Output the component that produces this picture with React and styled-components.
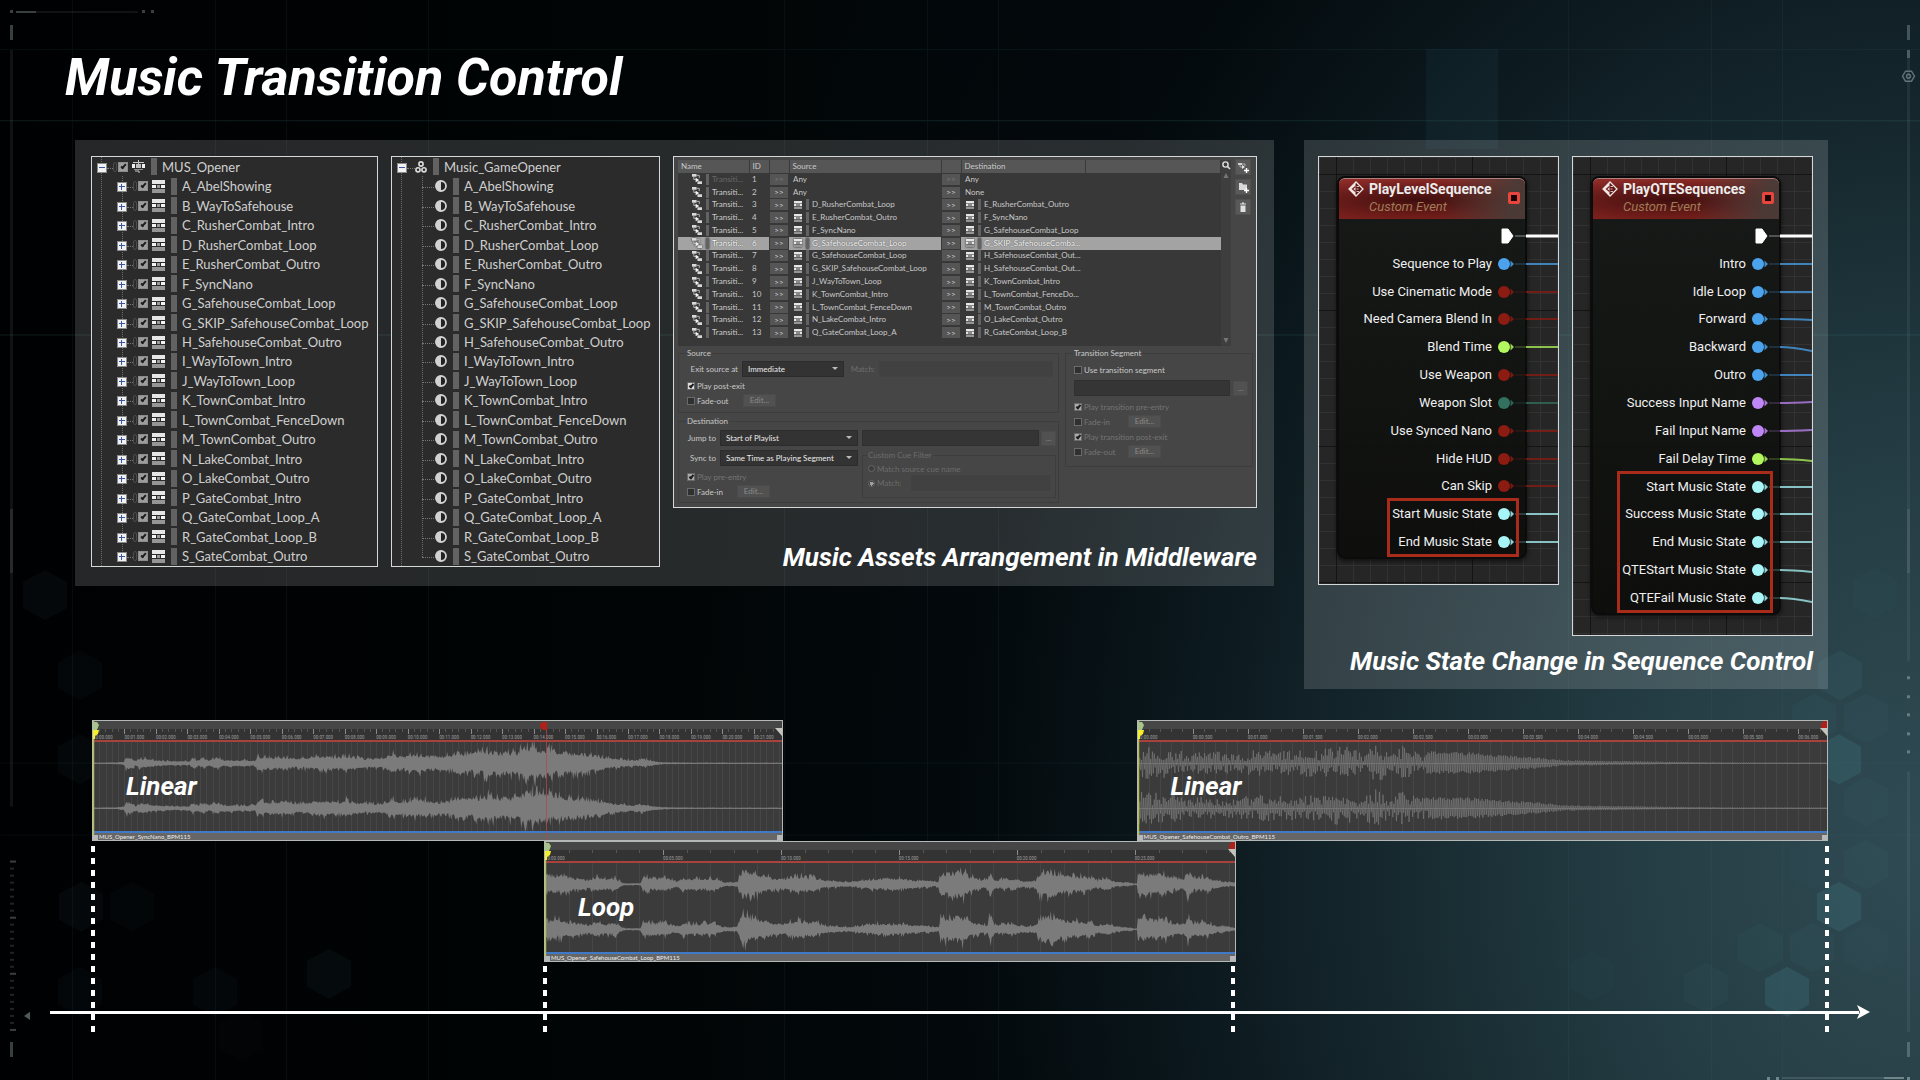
import React from "react";
import styled, { createGlobalStyle, css } from "styled-components";

const DISPLAY = `Roboto, "Noto Sans", sans-serif`;
const TREE_FONT = `Lato, "Open Sans", sans-serif`;
const RULER_FONT = `"Roboto Condensed", Roboto, sans-serif`;

const GlobalStyle = createGlobalStyle`
  *, *::before, *::after { box-sizing: border-box; }
  body { margin: 0; background: #010203; }
  ul { list-style: none; margin: 0; padding: 0; }
  h1, h2, h3, p { margin: 0; }
  button, input, select { font: inherit; color: inherit; margin: 0; padding: 0; border-radius: 0; }
`;

/* ---------- page ---------- */

const Page = styled.main`
  position: relative;
  isolation: isolate;
  min-height: 100vh;
  padding: 48px 92px 48px 75px;
  overflow: hidden;
  font-family: ${DISPLAY};
  color: #fff;
  background:
    radial-gradient(ellipse 1060px 1400px at 100% 78%,
      #304a54 0%, #294249 18%, #20373e 34%, #15272d 52%, #0a161b 72%, rgba(3, 9, 12, 0.9) 90%, rgba(1, 3, 4, 0) 118%),
    linear-gradient(90deg, #000102 0%, #010506 35%, #02080b 60%, #03090d 100%);
`;

const Backdrop = styled.svg`
  position: absolute;
  inset: 0;
  z-index: -1;
  width: 100%;
  height: 100%;
`;

const Title = styled.h1`
  margin-left: -10px;
  font: italic 700 52px/60px ${DISPLAY};
`;

const Panels = styled.div`
  display: grid;
  grid-template-columns: 1199fr 524fr;
  align-items: start;
  gap: 30px;
  margin-top: 32px;
`;

const Panel = styled.section`
  display: grid;
  grid-template-columns: ${(p) => p.$columns};
  column-gap: 13px;
  align-items: start;
  padding: ${(p) => p.$padding};
  background: rgba(255, 255, 255, 0.15);
`;

const Caption = styled.h2`
  grid-column: ${(p) => (p.$wide ? "1 / -1" : "auto")};
  margin-top: ${(p) => (p.$wide ? "9px" : "33px")};
  font: italic 700 26px/32px ${DISPLAY};
  text-align: right;
  white-space: nowrap;
`;

const shot = css`
  border: 1px solid #d4d8d8;
`;

/* ---------- trees ---------- */

const Tree = styled.div`
  ${shot}
  position: relative;
  display: grid;
  grid-template-rows: 1fr 20fr;
  height: 411px;
  background: #2b2b2b;
  color: #cfcfcf;
  font: 400 13px/18px ${TREE_FONT};
  &::before {
    content: "";
    position: absolute;
    left: 9px;
    top: 0;
    bottom: 0;
    border-left: 1px dotted #6c6c6c;
  }
`;

const Branch = styled.ul`
  position: relative;
  display: grid;
  grid-auto-rows: 1fr;
  &::before {
    content: "";
    position: absolute;
    left: 30px;
    top: 0;
    bottom: 9px;
    border-left: 1px dotted #6c6c6c;
  }
`;

const Row = styled.div`
  position: relative;
  display: flex;
  align-items: center;
  height: 100%;
  padding-left: ${(p) => p.$indent}px;
  white-space: nowrap;
`;

const Expander = styled.button`
  position: relative;
  flex: none;
  width: 10px;
  height: 10px;
  margin-top: 2px;
  border: 1px solid #8a8a8a;
  background: #f2f2f2;
  &::before, &::after {
    content: "";
    position: absolute;
    left: 1px;
    top: 3px;
    width: 6px;
    height: 1px;
    background: #3a55a8;
  }
  &::after {
    display: ${(p) => (p.$open ? "none" : "block")};
    left: 3px;
    top: 1px;
    width: 1px;
    height: 6px;
  }
`;

const Dots = styled.span`
  flex: none;
  width: ${(p) => p.$w}px;
  margin-top: 3px;
  margin-right: ${(p) => p.$after || 0}px;
  border-top: 1px dotted #777;
`;

const Chain = styled.span`
  flex: none;
  width: 4px;
  height: 10px;
  margin-right: 1px;
  border: 1px solid #4c4c4c;
  border-radius: 2px;
`;

const Check = styled.input.attrs({ type: "checkbox" })`
  appearance: none;
  position: relative;
  flex: none;
  width: ${(p) => p.$size}px;
  height: ${(p) => p.$size}px;
  border: 1px solid ${(p) => (p.$size > 8 ? "#8d8d8d" : "#6a6a6a")};
  background: #303030;
  &:checked { background: ${(p) => (p.$size > 8 ? "#9d9d9d" : "#dcdcdc")}; }
  &:checked:disabled { background: #aaa; }
  &:checked::after {
    content: "";
    position: absolute;
    left: ${(p) => (p.$size > 8 ? 3 : 2)}px;
    top: 0;
    width: 3px;
    height: ${(p) => (p.$size > 8 ? 6 : 5)}px;
    border: solid #1c1c1c;
    border-width: 0 2px 2px 0;
    transform: rotate(40deg);
  }
`;

const IconBox = styled.svg`
  display: block;
  flex: none;
  width: ${(p) => p.$w}px;
  height: ${(p) => p.$h || p.$w}px;
`;

const Bar = styled.span`
  flex: none;
  width: ${(p) => p.$w || 6}px;
  height: ${(p) => p.$h || 17}px;
  margin: 0 5px 0 6px;
  background: #626262;
`;

const SegmentIcon = ({ w = 13 }) => (
  <IconBox $w={w} viewBox="0 0 13 13" aria-hidden="true">
    <rect x="0" y="0" width="13" height="4" fill="#e6e6e6" />
    <rect x="0" y="5" width="4" height="3" fill="#f4f4f4" />
    <rect x="5" y="5" width="3" height="3" fill="#9a9a9a" />
    <rect x="9" y="5" width="4" height="3" fill="#f4f4f4" />
    <rect x="0" y="9" width="13" height="4" fill="#959595" />
  </IconBox>
);

const PlaylistIcon = () => (
  <IconBox $w={13} viewBox="0 0 13 13" aria-hidden="true">
    <path d="M6.500 0v4M1 2.500h11M3 11h4v2" stroke="#c8c8c8" fill="none" />
    <rect x="0" y="4" width="3" height="4" fill="#f0f0f0" />
    <rect x="4" y="4" width="5" height="4" fill="#c0c0c0" />
    <rect x="10" y="4" width="3" height="4" fill="#f0f0f0" />
    <path d="M2 9.500h9" stroke="#8a8a8a" />
  </IconBox>
);

const GroupIcon = () => (
  <IconBox $w={12} viewBox="0 0 12 12" aria-hidden="true">
    <g fill="none" stroke="#dcdcdc" strokeWidth="1.6">
      <circle cx="6" cy="3" r="2.1" />
      <circle cx="3" cy="8.8" r="2.1" />
      <circle cx="9" cy="8.8" r="2.1" />
    </g>
  </IconBox>
);

const StateIcon = () => (
  <IconBox $w={12} viewBox="0 0 12 12" aria-hidden="true">
    <circle cx="6" cy="6" r="5" fill="#222" stroke="#d2d2d2" strokeWidth="1.8" />
    <path d="M6 0.5a5.5 5.5 0 0 0 0 11z" fill="#d2d2d2" />
  </IconBox>
);

const assets = [
  "A_AbelShowing", "B_WayToSafehouse", "C_RusherCombat_Intro", "D_RusherCombat_Loop",
  "E_RusherCombat_Outro", "F_SyncNano", "G_SafehouseCombat_Loop", "G_SKIP_SafehouseCombat_Loop",
  "H_SafehouseCombat_Outro", "I_WayToTown_Intro", "J_WayToTown_Loop", "K_TownCombat_Intro",
  "L_TownCombat_FenceDown", "M_TownCombat_Outro", "N_LakeCombat_Intro", "O_LakeCombat_Outro",
  "P_GateCombat_Intro", "Q_GateCombat_Loop_A", "R_GateCombat_Loop_B", "S_GateCombat_Outro",
];

const Gap = styled.span`
  flex: none;
  width: 4px;
`;

function PlaylistTree() {
  return (
    <Tree>
      <Row $indent={5}>
        <Expander $open aria-label="Collapse MUS_Opener" />
        <Dots $w={6} /><Chain />
        <Check $size={10} defaultChecked aria-label="MUS_Opener" />
        <Gap /><PlaylistIcon /><Bar />MUS_Opener
      </Row>
      <Branch>
        {assets.map((name) => (
          <li key={name}>
            <Row $indent={25}>
              <Expander aria-label={`Expand ${name}`} />
              <Dots $w={6} /><Chain />
              <Check $size={10} defaultChecked aria-label={name} />
              <Gap /><SegmentIcon /><Bar />{name}
            </Row>
          </li>
        ))}
      </Branch>
    </Tree>
  );
}

function StateTree() {
  return (
    <Tree>
      <Row $indent={5}>
        <Expander $open aria-label="Collapse Music_GameOpener" />
        <Dots $w={8} /><GroupIcon /><Bar />Music_GameOpener
      </Row>
      <Branch>
        {assets.map((name) => (
          <li key={name}>
            <Row $indent={30}>
              <Dots $w={12} $after={1} /><StateIcon /><Bar />{name}
            </Row>
          </li>
        ))}
      </Branch>
    </Tree>
  );
}

/* ---------- transition editor ---------- */

const Column = styled.div`
  min-width: 0;
`;

const Editor = styled.div`
  ${shot}
  padding: 3px 3px 4px 4px;
  background: #464646;
  color: #c8c8c8;
  font: 400 8px/12px ${TREE_FONT};
`;

const Top = styled.div`
  display: grid;
  grid-template-columns: 1fr 10px 22px;
  height: 186px;
`;

const TableBox = styled.div`
  background: #383838;
`;

const Table = styled.table`
  width: 100%;
  height: 179px;
  border-collapse: collapse;
  table-layout: fixed;
  line-height: 11px;
  th {
    height: 13px;
    padding: 0 3px;
    background: #565656;
    border-right: 1px solid #3b3b3b;
    font-weight: 400;
    text-align: left;
  }
  td { padding: 0 3px; white-space: nowrap; overflow: hidden; }
`;

const Col = styled.col`
  width: ${(p) => p.$w};
`;

const Tr = styled.tr`
  ${(p) => p.$selected && css`
    td { background: #a3a3a3; color: #fff; text-shadow: 0 0 1px #222; }
    svg, ${Bar} { filter: drop-shadow(0 0 1px #222); }
  `}
  && td:nth-child(3), && td:nth-child(5) { padding: 0 1px; background: #383838; text-shadow: none; }
`;

const Cell = styled.span`
  display: flex;
  align-items: center;
  padding-left: ${(p) => p.$indent || 0}px;
  color: ${(p) => (p.$dim ? "#666" : "inherit")};
  ${Bar} { margin: 0 3px 0 4px; }
`;

const Jump = styled.button`
  display: block;
  width: 100%;
  height: 11px;
  border: 0;
  background: #555;
  color: ${(p) => (p.disabled ? "#7d7d7d" : "#d0d0d0")};
  line-height: 10px;
  text-align: center;
`;

const ScrollStrip = styled.div`
  display: flex;
  flex-direction: column;
  justify-content: space-between;
  align-items: center;
  background: #3e3e3e;
`;

const Tools = styled.div`
  display: flex;
  flex-direction: column;
  gap: 4px;
  margin: -1px 0 0 4px;
`;

const Tool = styled.button`
  display: grid;
  place-items: center;
  width: 16px;
  height: 16px;
  border: 1px solid #4f4f4f;
  background: #595959;
`;

const TransitionIcon = () => (
  <IconBox $w={10} viewBox="0 0 11 11" aria-hidden="true">
    <rect x="0" y="0" width="5" height="3" fill="#d8d8d8" />
    <path d="M2 3v3h3M5 1.5h3v3" stroke="#bdbdbd" fill="none" />
    <path d="M4 4l4 2.5L4 9z" fill="#f2f2f2" />
    <rect x="6" y="8" width="5" height="3" fill="#d8d8d8" />
  </IconBox>
);

const AddTransitionIcon = () => (
  <IconBox $w={11} viewBox="0 0 11 11" aria-hidden="true">
    <rect x="0" y="1" width="4" height="2" fill="#cfcfcf" />
    <path d="M2 3v2h2M4 2h3v2" stroke="#b0b0b0" fill="none" />
    <path d="M4 3l3 2-3 2z" fill="#e6e6e6" />
    <path d="M8.500 6v5M6 8.500h5" stroke="#fff" strokeWidth="1.4" />
  </IconBox>
);

const transitions = [
  ["Any", "Any"], ["Any", "None"],
  ["D_RusherCombat_Loop", "E_RusherCombat_Outro"],
  ["E_RusherCombat_Outro", "F_SyncNano"],
  ["F_SyncNano", "G_SafehouseCombat_Loop"],
  ["G_SafehouseCombat_Loop", "G_SKIP_SafehouseComba..."],
  ["G_SafehouseCombat_Loop", "H_SafehouseCombat_Out..."],
  ["G_SKIP_SafehouseCombat_Loop", "H_SafehouseCombat_Out..."],
  ["J_WayToTown_Loop", "K_TownCombat_Intro"],
  ["K_TownCombat_Intro", "L_TownCombat_FenceDo..."],
  ["L_TownCombat_FenceDown", "M_TownCombat_Outro"],
  ["N_LakeCombat_Intro", "O_LakeCombat_Outro"],
  ["Q_GateCombat_Loop_A", "R_GateCombat_Loop_B"],
];

const Target = ({ name }) =>
  name.length < 5 ? <Cell $indent={1}>{name}</Cell> : (
    <Cell $indent={2}><SegmentIcon w={8} /><Bar $w={3} $h={11} />{name}</Cell>
  );

const Forms = styled.div`
  display: grid;
  grid-template-columns: 381fr 188fr;
  gap: 6px;
  align-items: start;
  margin-top: 1px;
`;

const Stack = styled.div`
  display: grid;
  gap: 2px;
  min-width: 0;
`;

const Group = styled.fieldset`
  min-width: 0;
  margin: 0;
  padding: ${(p) => p.$padding};
  border: 1px solid #3d3d3d;
  color: ${(p) => (p.disabled ? "#6c6c6c" : "inherit")};
`;

const Legend = styled.legend`
  margin-left: -1px;
  padding: 0 1px;
`;

const Line = styled.div`
  display: flex;
  align-items: center;
  height: ${(p) => p.$h || 13}px;
  margin-top: ${(p) => p.$top || 0}px;
  white-space: nowrap;
`;

const Label = styled.label`
  flex: none;
  width: ${(p) => (p.$w ? `${p.$w}px` : "auto")};
  padding: 0 4px 0 0;
  text-align: right;
  color: ${(p) => (p.$dim ? "#6e6e6e" : "inherit")};
`;

const Tick = styled.label`
  display: flex;
  align-items: center;
  gap: 2px;
  width: ${(p) => (p.$w ? `${p.$w}px` : "auto")};
  color: ${(p) => (p.$dim ? "#747474" : "inherit")};
`;

const Drop = styled.span`
  position: relative;
  flex: none;
  width: ${(p) => p.$w}px;
  height: 16px;
  &::after {
    content: "";
    position: absolute;
    right: 6px;
    top: 6px;
    border: 3px solid transparent;
    border-top-color: #bbb;
    border-bottom: 0;
  }
  select {
    appearance: none;
    display: block;
    width: 100%;
    height: 16px;
    padding: 0 5px;
    border: 1px solid #2c2c2c;
    background: #333;
    color: #ececec;
    line-height: 14px;
  }
`;

const Field = styled.input.attrs({ type: "text" })`
  flex: 1;
  min-width: 0;
  height: 16px;
  border: 1px solid ${(p) => (p.$faint ? "#424242" : "#303030")};
  background: ${(p) => (p.$faint ? "#414141" : "#353535")};
`;

const Small = styled.button`
  flex: none;
  width: ${(p) => p.$w || 33}px;
  height: ${(p) => p.$h || 13}px;
  margin-left: ${(p) => p.$left || 0}px;
  border: 1px solid #4b4b4b;
  background: #515151;
  color: #8a8a8a;
  line-height: 11px;
`;

const Radio = styled.input.attrs({ type: "radio" })`
  appearance: none;
  width: 7px;
  height: 7px;
  border: 1px solid #666;
  border-radius: 50%;
  background: #3c3c3c;
  &:checked { background: radial-gradient(circle, #a0a0a0 0 2px, #3c3c3c 2px); }
`;

const TwoCols = styled.div`
  display: grid;
  grid-template-columns: 171px 1fr;
  gap: 4px;
`;

const TickBox = ({ children, dim, checked, w }) => (
  <Tick $dim={dim} $w={w}>
    <Check $size={8} defaultChecked={checked} disabled={dim} />
    {children}
  </Tick>
);

function TransitionEditor() {
  return (
    <Editor>
      <Top>
        <TableBox>
          <Table>
            <colgroup>
              <Col $w="71px" /><Col $w="20px" /><Col $w="20px" /><Col $w="152px" />
              <Col $w="20px" /><Col $w="124px" /><Col $w="auto" />
            </colgroup>
            <thead>
              <tr><th>Name</th><th>ID</th><th /><th>Source</th><th /><th>Destination</th><th /></tr>
            </thead>
            <tbody>
              {transitions.map(([from, to], i) => (
                <Tr key={i} $selected={i === 5}>
                  <td><Cell $indent={11} $dim={i === 0}><TransitionIcon /><Bar $w={3} $h={11} />Transiti...</Cell></td>
                  <td>{i + 1}</td>
                  <td><Jump disabled={i === 0}>&gt;&gt;</Jump></td>
                  <td><Target name={from} /></td>
                  <td><Jump disabled={i === 0}>&gt;&gt;</Jump></td>
                  <td><Target name={to} /></td>
                  <td />
                </Tr>
              ))}
            </tbody>
          </Table>
        </TableBox>
        <ScrollStrip>
          <IconBox $w={10} $h={22} viewBox="0 0 10 22" aria-hidden="true">
            <circle cx="4.5" cy="4.5" r="2.6" fill="none" stroke="#e0e0e0" strokeWidth="1.4" />
            <path d="M6.5 6.5L9 9" stroke="#e0e0e0" strokeWidth="1.6" />
            <path d="M2.5 18L5 13l2.5 5z" fill="#777" />
          </IconBox>
          <IconBox $w={10} viewBox="0 0 10 10" aria-hidden="true">
            <path d="M2.5 2L5 7l2.5-5z" fill="#777" />
          </IconBox>
        </ScrollStrip>
        <Tools>
          <Tool aria-label="Add transition"><AddTransitionIcon /></Tool>
          <Tool aria-label="Add folder">
            <IconBox $w={11} viewBox="0 0 11 11" aria-hidden="true">
              <path d="M1 1h3l1 1.5h4V8H1z" fill="#dadada" />
              <path d="M8.5 6v5M6 8.5h5" stroke="#fff" strokeWidth="1.4" />
            </IconBox>
          </Tool>
          <Tool aria-label="Delete">
            <IconBox $w={10} viewBox="0 0 10 10" aria-hidden="true">
              <path d="M2 2h6M4 1h2" stroke="#e0e0e0" strokeWidth="1.2" />
              <path d="M2.5 3.5h5V10h-5z" fill="#e0e0e0" />
            </IconBox>
          </Tool>
        </Tools>
      </Top>
      <Forms>
        <Stack>
          <Group $padding="2px 5px 5px 8px">
            <Legend>Source</Legend>
            <Stack>
              <Line $h={16}>
                <Label $w={55} htmlFor="exit">Exit source at</Label>
                <Drop $w={102}><select id="exit"><option>Immediate</option></select></Drop>
                <Label $w={35} $dim htmlFor="exit-match">Match:</Label>
                <Field $faint id="exit-match" disabled />
              </Line>
              <Line><TickBox checked>Play post-exit</TickBox></Line>
              <Line><TickBox w={56}>Fade-out</TickBox><Small disabled>Edit...</Small></Line>
            </Stack>
          </Group>
          <Group $padding="3px 2px 4px 8px">
            <Legend>Destination</Legend>
            <TwoCols>
              <Stack>
                <Line $h={16}>
                  <Label $w={33} htmlFor="jump">Jump to</Label>
                  <Drop $w={138}><select id="jump"><option>Start of Playlist</option></select></Drop>
                </Line>
                <Line $h={16} $top={2}>
                  <Label $w={33} htmlFor="sync">Sync to</Label>
                  <Drop $w={138}><select id="sync"><option>Same Time as Playing Segment</option></select></Drop>
                </Line>
                <Line $top={2}><TickBox dim checked>Play pre-entry</TickBox></Line>
                <Line><TickBox w={50}>Fade-in</TickBox><Small disabled>Edit...</Small></Line>
              </Stack>
              <Stack>
                <Line $h={16}>
                  <Field aria-label="Playlist item" disabled />
                  <Small $w={15} $h={15} $left={2} disabled>...</Small>
                </Line>
                <Group disabled $padding="1px 4px 5px 5px">
                  <Legend>Custom Cue Filter</Legend>
                  <Line>
                    <Tick><Radio name="cue" />Match source cue name</Tick>
                  </Line>
                  <Line $h={16}>
                    <Tick $w={43}><Radio name="cue" defaultChecked />Match:</Tick>
                    <Field $faint aria-label="Cue name" />
                  </Line>
                </Group>
              </Stack>
            </TwoCols>
          </Group>
        </Stack>
        <Group $padding="4px 4px 8px 8px">
          <Legend>Transition Segment</Legend>
          <Stack>
            <Line><TickBox>Use transition segment</TickBox></Line>
            <Line $h={16} $top={2}>
              <Field aria-label="Transition segment" disabled />
              <Small $w={15} $h={15} $left={3} disabled>...</Small>
            </Line>
            <Line $top={2}><TickBox dim checked>Play transition pre-entry</TickBox></Line>
            <Line><TickBox dim w={54}>Fade-in</TickBox><Small disabled>Edit...</Small></Line>
            <Line><TickBox dim checked>Play transition post-exit</TickBox></Line>
            <Line><TickBox dim w={54}>Fade-out</TickBox><Small disabled>Edit...</Small></Line>
          </Stack>
        </Group>
      </Forms>
    </Editor>
  );
}

/* ---------- node graphs ---------- */

const Graph = styled.div`
  ${shot}
  min-width: 0;
  padding: ${(p) => `19px 31px ${p.$bottom}px 18px`};
  overflow: hidden;
  background-color: #262626;
  background-image:
    linear-gradient(90deg, #141414 1px, transparent 1px),
    linear-gradient(#141414 1px, transparent 1px),
    linear-gradient(90deg, #323232 1px, transparent 1px),
    linear-gradient(#323232 1px, transparent 1px);
  background-size: 136px 136px, 136px 136px, 17px 17px, 17px 17px;
  background-position: 17px 17px;
`;

const Node = styled.article`
  border: 2px solid #0b0b0b;
  border-radius: 8px;
  background: linear-gradient(rgba(22, 25, 23, 0.94), rgba(12, 13, 11, 0.93));
  box-shadow: 0 2px 5px rgba(0, 0, 0, 0.6);
`;

const NodeHead = styled.header`
  display: grid;
  grid-template-columns: 16px 1fr 12px;
  column-gap: 5px;
  align-items: center;
  height: 41px;
  padding: 1px 5px 4px 9px;
  border-top: 1px solid #b08080;
  border-radius: 6px 6px 0 0;
  background:
    linear-gradient(100deg, transparent 55%, rgba(70, 60, 56, 0.9) 92%),
    radial-gradient(ellipse 75% 55% at 42% 52%, rgba(50, 10, 10, 0.85), transparent),
    linear-gradient(#902c28, #7c201c);
`;

const NodeTitle = styled.h3`
  font: 700 14px/18px ${DISPLAY};
  color: #ececec;
`;

const NodeSub = styled.p`
  font: italic 400 13px/18px ${DISPLAY};
  color: #a07c58;
`;

const HeadIcon = styled(IconBox)`
  align-self: start;
  margin-top: 1px;
`;

const Stop = styled.span`
  width: 12px;
  height: 12px;
  border: 3px solid #e8453c;
  border-radius: 2px;
  background: #180404;
`;

const Pins = styled.ul`
  display: grid;
  grid-template-rows: repeat(${(p) => p.$count}, 1fr);
  height: ${(p) => p.$h}px;
  margin: 3px 0 1px;
`;

const Pin = styled.li`
  grid-row: ${(p) => p.$row};
  grid-column: 1;
  display: flex;
  align-items: center;
  justify-content: flex-end;
  gap: 6px;
  margin-right: -33px;
  font: 400 13px/18px ${DISPLAY};
  color: #f0f0f0;
  white-space: nowrap;
`;

const Wire = styled.svg`
  display: block;
  flex: none;
  width: 60px;
  height: 20px;
`;

const Highlight = styled.li`
  grid-row: ${(p) => `${p.$from} / -1`};
  grid-column: 1;
  justify-self: end;
  width: ${(p) => p.$w}px;
  margin: -2px 6px -1px 0;
  border: 3px solid #a92c1b;
`;

const C = {
  exec: "#ffffff", blue: "#4aa3ec", red: "#8c1b12", green: "#b2f75e",
  teal: "#33705f", purple: "#bf86f6", cyan: "#a8f5f8",
};

function PinWire({ kind, bend = 0 }) {
  const color = C[kind];
  const exec = kind === "exec";
  return (
    <Wire viewBox="0 0 60 20" aria-hidden="true">
      <path d="M17 10H28" stroke={color} strokeWidth={exec ? 2 : 1.5} opacity="0.25" />
      <path
        d={`M28 10Q40 10 60 ${10 + bend}`}
        stroke={color} strokeWidth={exec ? 3 : 2} fill="none" opacity={exec ? 1 : 0.75}
      />
      {exec
        ? <path d="M4 3h6l5 7-5 7H4z" fill={color} stroke={color} strokeLinejoin="round" />
        : <g fill={color}><circle cx="6" cy="10" r="6" /><path d="M12.500 6.500L16 10l-3.500 3.500z" opacity="0.85" /></g>}
    </Wire>
  );
}

function EventNode({ title, pins, height, from, frame }) {
  return (
    <Node>
      <NodeHead>
        <HeadIcon $w={16} viewBox="0 0 16 16" aria-hidden="true">
          <path d="M8 1l7 7-7 7-7-7z" fill="#5c1614" stroke="#f2e8e8" strokeWidth="1.3" />
          <path d="M7.500 1.500v13L1 8z" fill="#f2e8e8" />
          <path d="M7.500 5.500L4.500 8l3 2.500" stroke="#7a201c" fill="none" strokeWidth="1.2" />
          <path d="M8.500 5.500h2.500M8.500 8h2M8.500 10.500h2.500" stroke="#f2e8e8" fill="none" strokeWidth="0.8" />
        </HeadIcon>
        <div>
          <NodeTitle>{title}</NodeTitle>
          <NodeSub>Custom Event</NodeSub>
        </div>
        <Stop />
      </NodeHead>
      <Pins $count={pins.length} $h={height}>
        {pins.map(([label, kind, bend], i) => (
          <Pin key={i} $row={i + 1}>{label}<PinWire kind={kind} bend={bend} /></Pin>
        ))}
        <Highlight $from={from} $w={frame} aria-hidden="true" />
      </Pins>
    </Node>
  );
}

const levelPins = [
  ["", "exec"], ["Sequence to Play", "blue"], ["Use Cinematic Mode", "red"],
  ["Need Camera Blend In", "red"], ["Blend Time", "green"], ["Use Weapon", "red"],
  ["Weapon Slot", "teal"], ["Use Synced Nano", "red"], ["Hide HUD", "red"], ["Can Skip", "red"],
  ["Start Music State", "cyan"], ["End Music State", "cyan"],
];
const qtePins = [
  ["", "exec"], ["Intro", "blue"], ["Idle Loop", "blue"], ["Forward", "blue", 1], ["Backward", "blue", 4],
  ["Outro", "blue"], ["Success Input Name", "purple", -1], ["Fail Input Name", "purple", -1],
  ["Fail Delay Time", "green", 2], ["Start Music State", "cyan"], ["Success Music State", "cyan"],
  ["End Music State", "cyan"], ["QTEStart Music State", "cyan", 2], ["QTEFail Music State", "cyan", 4],
];

/* ---------- timeline ---------- */

const Timeline = styled.section`
  position: relative;
  margin: 31px 0 0 17px;
  padding-bottom: 15px;
`;

const Track = styled.div`
  display: grid;
  grid-template-columns: ${(p) => p.$columns};
`;

const Clip = styled.article`
  position: relative;
  grid-column: ${(p) => p.$col};
  min-width: 0;
  border: 1px solid #b4b8b6;
  background: #464646;
`;

const Ruler = styled.div`
  display: flex;
  height: 11px;
  margin-top: 8px;
  overflow: hidden;
  background: #333;
`;

const Second = styled.span`
  flex: none;
  width: ${(p) => p.$w}%;
  padding-top: 5px;
  background:
    linear-gradient(#8a8a8a, #8a8a8a) 0 0 / 1px 5px no-repeat,
    repeating-linear-gradient(90deg, #555 0 1px, transparent 1px 20%) 0 0 / 100% 3px no-repeat;
  font: 400 5px/6px ${RULER_FONT};
  color: #9c9c9c;
  white-space: nowrap;
`;

const Wave = styled.div`
  border-top: 2px solid #a8423d;
  border-bottom: 2px solid #3f79c8;
  background: repeating-linear-gradient(90deg, #464646 0 1px, #3b3b3b 1px ${(p) => p.$step}%);
  svg { display: block; width: 100%; height: 89px; }
`;

const ClipName = styled.p`
  height: 7px;
  padding-left: 6px;
  background: #666;
  font: 400 6px/7px ${TREE_FONT};
  color: #eee;
`;

const ClipLabel = styled.h3`
  position: absolute;
  left: 33px;
  top: 49px;
  font: italic 700 26px/32px ${DISPLAY};
`;

const StartMark = styled.svg`
  position: absolute;
  left: 0;
  top: 0;
  width: 7px;
  height: 119px;
`;

const EndMark = styled.svg`
  position: absolute;
  right: 0;
  top: 0;
  width: 7px;
  height: 119px;
`;

const Playhead = styled.svg`
  position: absolute;
  left: 64.8%;
  top: 0;
  width: 7px;
  height: 119px;
`;

const Guide = styled.span`
  position: absolute;
  left: ${(p) => p.$at}%;
  top: ${(p) => p.$top}px;
  bottom: 0;
  width: 4px;
  margin-left: ${(p) => (p.$at > 50 ? "-3px" : "-1px")};
  background: repeating-linear-gradient(#fff 0 6px, transparent 6px 12px);
`;

const Axis = styled.div`
  display: flex;
  align-items: center;
  height: 14px;
  margin: 43px -42px 0;
  &::before {
    content: "";
    flex: 1;
    height: 3px;
    background: #fff;
  }
  svg { width: 13px; height: 14px; margin-left: -2px; }
`;

function random(seed) {
  let s = seed;
  return () => {
    s = (s * 16807) % 2147483647;
    return s / 2147483647;
  };
}

function level(points, x) {
  for (let i = 1; i < points.length; i++) {
    const [x0, a0] = points[i - 1];
    const [x1, a1] = points[i];
    if (x <= x1) return a0 + ((a1 - a0) * (x - x0)) / (x1 - x0);
  }
  return points[points.length - 1][1];
}

function solidWave(points, mid, seed) {
  const rnd = random(seed);
  const up = [];
  const down = [];
  for (let x = 0; x <= 689; x++) {
    const a = level(points, x);
    const spike = () => 0.45 + 0.35 * rnd() + (rnd() > 0.85 ? 0.35 : 0);
    up.push(`${x} ${(mid - a * spike()).toFixed(1)}`);
    down.unshift(`${x} ${(mid + 0.5 + a * spike()).toFixed(1)}`);
  }
  return `M${up.join("L")}L${down.join("L")}Z`;
}

function denseWave(points, mid, seed) {
  const rnd = random(seed);
  const out = [];
  for (let x = 0, i = 0; x <= 689; x += 0.9, i++) {
    const quiet = x > 290;
    const a = level(points, x) * (quiet ? 0.65 + 0.3 * rnd() : 0.15 + 0.75 * rnd());
    out.push(`${x.toFixed(1)} ${(mid + (i % 2 ? a : -a)).toFixed(1)}`);
  }
  return `M${out.join("L")}`;
}

const px = (list) => list.map(([x, a]) => [(x - 28) / 2.178, a]);
const syncNano = px([
  [28, 0.4], [80, 0.8], [95, 2], [100, 8], [115, 6], [120, 3], [130, 7], [150, 5], [175, 3], [200, 2.5],
  [238, 2.5], [245, 7], [255, 3.5], [270, 7], [280, 3], [298, 8], [312, 4], [380, 3.5], [387, 9], [410, 8],
  [440, 9], [470, 6], [510, 9], [530, 10], [560, 8], [580, 11], [605, 7], [660, 6], [676, 13], [700, 9],
  [735, 12], [780, 9], [810, 10], [822, 17], [850, 12], [880, 17], [930, 15], [955, 16], [966, 23], [990, 22],
  [1014, 21], [1030, 16], [1060, 15], [1090, 14], [1120, 11], [1150, 7], [1200, 4], [1230, 5], [1248, 2.5],
  [1270, 1], [1330, 0.5], [1532, 0.4],
]);
const combatLoop = [
  [0, 11], [8, 13], [22, 11], [38, 7], [44, 6], [50, 10], [60, 7], [70, 8], [77, 2], [80, 1], [95, 1], [98, 10],
  [110, 8], [120, 9], [132, 4], [138, 8], [150, 7], [165, 8], [174, 6], [178, 2.5], [192, 3], [197, 20], [206, 16],
  [214, 14], [228, 8], [242, 7], [246, 11], [258, 12], [264, 9], [268, 11], [278, 5], [302, 3], [318, 5], [328, 7],
  [342, 8], [365, 6], [382, 4], [393, 3], [395, 14], [408, 18], [418, 18], [424, 11], [436, 6], [442, 6],
  [445, 21], [449, 6], [468, 7], [478, 4], [490, 5], [494, 16], [504, 18], [516, 13], [530, 11], [545, 10],
  [550, 5], [562, 8], [570, 3], [585, 2], [588, 0.6], [591, 0.6], [592, 15], [606, 14], [618, 14], [628, 8],
  [638, 7], [642, 19], [648, 8], [660, 10], [670, 5], [689, 2],
];
const combatOutro = [
  [0, 18], [22, 17], [40, 15], [50, 10], [72, 14], [95, 11], [120, 16], [140, 13], [160, 15], [185, 16], [208, 20],
  [225, 10], [236, 23], [246, 18], [252, 8], [262, 20], [275, 14], [300, 12], [340, 11], [370, 8], [400, 6], [425, 3],
  [460, 2.5], [520, 1.5], [580, 0.8], [620, 0.4], [689, 0.3],
];

const stamp = (v) => `00:${v.toFixed(3).padStart(6, "0")}`;

function AudioClip({ label, name, col, count, step, points, dense, playhead, grid }) {
  const marks = Array.from({ length: Math.ceil(count) }, (_, i) => stamp(i * step));
  const wave = dense ? denseWave : solidWave;
  const paint = dense
    ? { fill: "none", stroke: "#7e7e7e", strokeWidth: 0.6 }
    : { fill: "#7b7b7b" };
  return (
    <Clip $col={col}>
      <Ruler>
        {marks.map((m) => <Second key={m} $w={100 / count}>{m}</Second>)}
      </Ruler>
      <Wave $step={100 / count / grid}>
        <svg viewBox="0 0 689 89" preserveAspectRatio="none" aria-hidden="true">
          <path d="M0 21.5H689M0 66.5H689" stroke="#7b7b7b" strokeWidth="0.7" />
          <path d={wave(points, 21, 77)} {...paint} />
          <path d={wave(points, 66, 4242)} {...paint} />
        </svg>
      </Wave>
      <ClipName>{name}</ClipName>
      {playhead && (
        <Playhead viewBox="0 0 7 119" aria-hidden="true">
          <path d="M7 1v8H3L0 6V3l3-2z" fill="#b02018" />
          <path d="M6.5 9V119" stroke="#b04a44" opacity="0.7" />
        </Playhead>
      )}
      <StartMark viewBox="0 0 7 119" aria-hidden="true">
        <path d="M0.5 0V119" stroke="#b4c04a" strokeWidth="1.5" />
        <path d="M0 1h4l2 3-2 5H0z" fill="#a8c48a" />
        <path d="M0 9h6l-1 4-3 2v3H0z" fill="#f4ef2c" />
        <path d="M0 114h5v5H0z" fill="#b8b8b8" />
      </StartMark>
      <EndMark viewBox="0 0 7 119" aria-hidden="true">
        {!playhead && <path d="M7 0H4L1 3v3l3 3h3z" fill="#b02018" />}
        <path d="M0 7h7v8z" fill="#c4c4bc" />
        <path d="M2 114h5v5H2z" fill="#b8b8b8" />
      </EndMark>
      <ClipLabel>{label}</ClipLabel>
    </Clip>
  );
}

/* ---------- backdrop drawing ---------- */

const hexes = [
  [1839, 758, 0.4], [1839, 905, 0.4], [1787, 990, 0.4], [1840, 674, 0.2], [1866, 717, 0.1], [1814, 717, 0.1],
  [1875, 592, 0.08], [1866, 800, 0.1], [1866, 863, 0.12], [1760, 946, 0.1], [1812, 946, 0.1], [1866, 946, 0.08],
  [1812, 863, 0.06], [1706, 986, 0.1], [1592, 974, 0.05], [45, 594, 0.08], [80, 674, 0.06], [80, 758, 0.07],
  [81, 905, 0.08], [132, 905, 0.05], [80, 990, 0.06], [215, 990, 0.06], [241, 1034, 0.03], [329, 972, 0.08],
];

const ticks = Array.from({ length: 25 }, (_, i) => i);

const Decoration = () => (
  <Backdrop viewBox="0 0 1920 1080" preserveAspectRatio="none" aria-hidden="true">
    <path d="M1426 49h72v100h-72z" fill="#3c6e7c" opacity="0.1" />
    <path
      d="M0 49.5H1920M0 120.5H1920M0 334.5H1920M0 761.5H1920M0 833.5H1920M72.5 0V1080M215.5 0V1080M286.5 0V1080M428.5 0V1080M784.5 0V1080M927.5 0V1080M998.5 0V1080M1568.5 0V1080M1711.5 0V1080M1782.5 0V1080"
      stroke="#3f8080" opacity="0.09"
    />
    <path d="M0 120.5H1920M0 334.5H1920" stroke="#3f8080" opacity="0.14" />
    {hexes.map(([x, y, o], i) => (
      <path key={i} d={`M${x} ${y - 25}l22 12v26l-22 12-22-12v-26z`} fill="#3a6a74" opacity={o} />
    ))}
    <g fill="#9fb4b8">
      <path d="M10 10h3v3h-3zM142 10h3v3h-3zM151 10h3v3h-3zM16 11h20v2H16zM10 25h3v15h-3z" opacity="0.35" />
      <path d="M36 11h102v2H36zM10 50h3v755h-3zM1907 50h3v610h-3zM1907 770h3v260h-3z" opacity="0.1" />
      <path d="M10 508h3v64h-3zM1907 508h3v64h-3z" opacity="0.15" />
      <path d="M1907 25h3v15h-3zM1907 50h3v8h-3zM1907 1040h3v15h-3zM10 1040h3v15h-3z" opacity="0.35" />
      {ticks.map((i) => (
        <rect key={i} x="10" y={859 + i * 7} width={i % 8 ? 4 : 6} height="2" opacity={i % 8 ? 0.2 : 0.35} />
      ))}
      {[675, 694, 712, 731, 749].map((y) => (
        <rect key={y} x="1907" y={y} width="3" height="3" opacity="0.5" />
      ))}
      <path d="M30 1010v8l-6-4z" opacity="0.5" />
      <path d="M1767 1075h3v3h-3zM1776 1075h3v3h-3zM1884 1075h20v2h-20zM1907 1075h3v3h-3z" opacity="0.6" />
      <path d="M1782 1075h102v2h-102z" opacity="0.2" />
    </g>
    <g fill="none" stroke="#8fa3a8" strokeWidth="1.5" opacity="0.6">
      <path d="M1905.5 71h6l3 5-3 5h-6l-3-5z" />
      <circle cx="1908.5" cy="76" r="2" />
    </g>
  </Backdrop>
);

export default function App() {
  return (
    <>
      <GlobalStyle />
      <Page>
        <Decoration />
        <Title>Music Transition Control</Title>
        <Panels>
          <Panel $columns="287fr 269fr 584fr" $padding="16px 17px 13px 16px">
            <PlaylistTree />
            <StateTree />
            <Column>
              <TransitionEditor />
              <Caption>Music Assets Arrangement in Middleware</Caption>
            </Column>
          </Panel>
          <Panel $columns="1fr 1fr" $padding="16px 15px 12px 14px">
            <Graph $bottom={25}>
              <EventNode title="PlayLevelSequence" pins={levelPins} height={334} from={11} frame={132} />
            </Graph>
            <Graph $bottom={20}>
              <EventNode title="PlayQTESequences" pins={qtePins} height={390} from={10} frame={156} />
            </Graph>
            <Caption $wide>Music State Change in Sequence Control</Caption>
          </Panel>
        </Panels>
        <Timeline>
          <Guide $at={0} $top={126} />
          <Guide $at={26.04} $top={246} />
          <Guide $at={65.8} $top={246} />
          <Guide $at={100} $top={126} />
          <Track $columns="691fr 353fr 691fr">
            <AudioClip
              label="Linear" name="MUS_Opener_SyncNano_BPM115" col={1}
              count={21.9} step={1} grid={5} points={syncNano} playhead
            />
            <AudioClip
              label="Linear" name="MUS_Opener_SafehouseCombat_Outro_BPM115" col={3}
              count={12.52} step={0.5} grid={5} points={combatOutro} dense
            />
          </Track>
          <Track $columns="452fr 692fr 592fr">
            <AudioClip
              label="Loop" name="MUS_Opener_SafehouseCombat_Loop_BPM115" col={2}
              count={5.85} step={5} grid={5} points={combatLoop}
            />
          </Track>
          <Axis>
            <svg viewBox="0 0 13 14" aria-hidden="true"><path d="M0 0l13 7-13 7 3-7z" fill="#fff" /></svg>
          </Axis>
        </Timeline>
      </Page>
    </>
  );
}
